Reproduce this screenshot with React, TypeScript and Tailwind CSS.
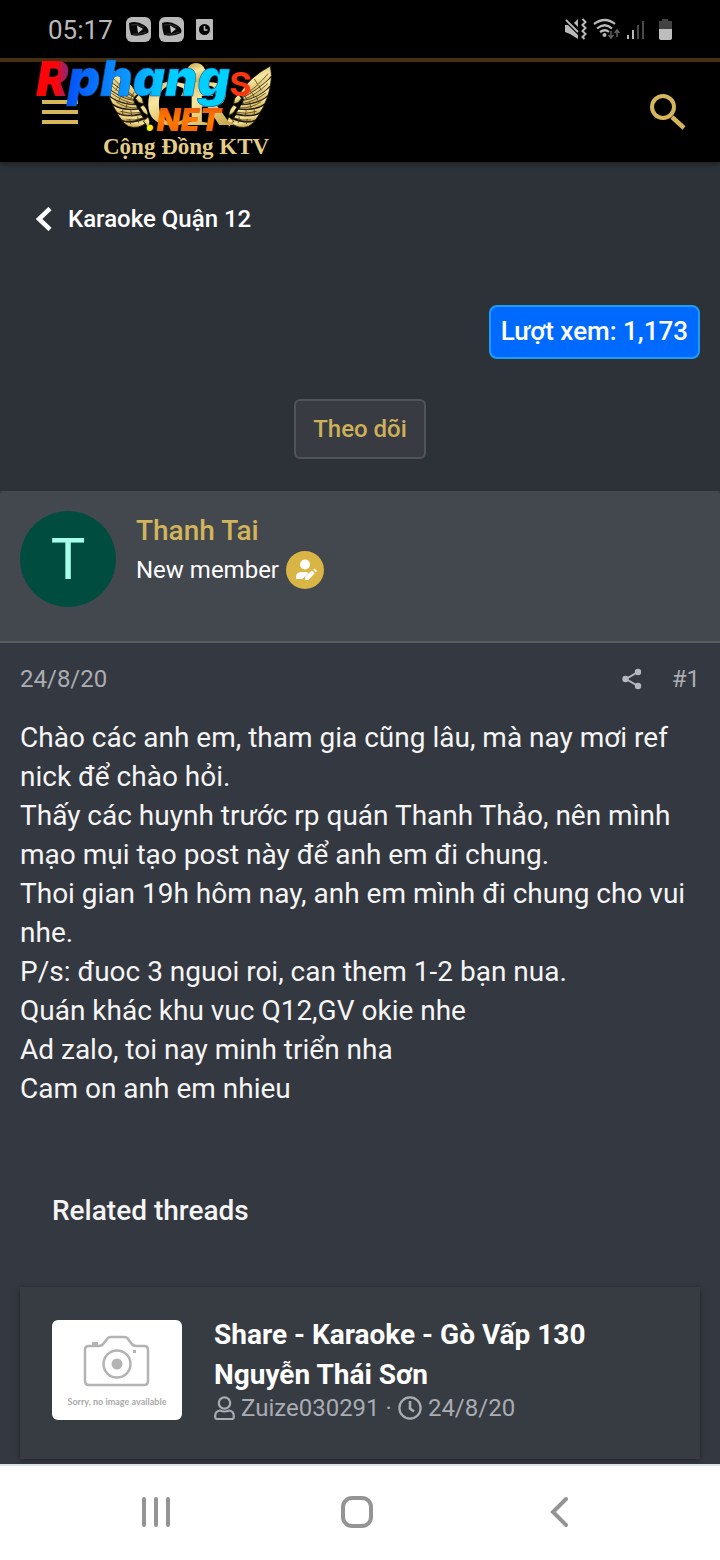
import React from "react";

const feathers = [
  "M36 0 Q18 10 9 26 L13 30 Q30 20 37 9 Z",
  "M37 10 Q24 23 12 29 L13 33 Q29 28 36 18 Z",
  "M36 19 Q25 30 12 32 L12 36 Q28 34 34 27 Z",
  "M34 28 Q24 36 10 36 L9 40 Q24 41 31 35 Z",
  "M31 36 Q22 42 8 40 L6 44 Q20 48 27 43 Z",
  "M27 44 Q19 48 6 45 L4 48 Q16 54 23 50 Z",
  "M23 51 Q14 54 3 49 L1 52 Q8 59 17 56 Z",
  "M8 26 Q4 30 4 35 L8 34 L11 30 Z",
  "M4 36 Q0 40 0 46 L4 43 L7 38 Z",
  "M0 47 Q-3 51 0 57 L4 51 Z",
];

function Wing({ transform }: { transform: string }) {
  return (
    <g transform={transform} fill="url(#gold)">
      {feathers.map((d) => (
        <path key={d} d={d} stroke="#15110a" strokeWidth="0.7" />
      ))}
      <g stroke="#4b3a18" strokeWidth="0.7" fill="none">
        <path d="M34 7 Q24 20 12 28M34 16 Q23 27 13 31M32 25 Q22 33 11 35M28 33 Q20 39 9 39M24 42 Q15 45 7 43M19 50 Q12 51 4 48" />
        <path d="M22 12 L25 17M16 18 L19 24M12 24 L15 30M26 18 L28 23M20 25 L22 29M24 29 L26 34M18 33 L19 39M22 40 L22 45M15 41 L14 47M16 49 L15 54M9 47 L8 53" />
      </g>
    </g>
  );
}

function Logo() {
  return (
    <svg viewBox="0 0 240 104" className="h-[104px] w-[240px] overflow-visible" aria-label="Rphangs.NET">
      <defs>
        <linearGradient id="gold" x1="0" y1="0" x2="0.4" y2="1">
          <stop offset="0" stopColor="#c49a35" />
          <stop offset="0.5" stopColor="#f6e7a0" />
          <stop offset="1" stopColor="#c9a548" />
        </linearGradient>
        <linearGradient id="red" x1="0" y1="0" x2="1" y2="0">
          <stop offset="0.6" stopColor="#fb0509" />
          <stop offset="1" stopColor="#6a2f9c" />
        </linearGradient>
        <linearGradient id="blue" gradientUnits="userSpaceOnUse" x1="34" y1="0" x2="196" y2="0">
          <stop offset="0" stopColor="#0653fa" />
          <stop offset="0.35" stopColor="#0b96ff" />
          <stop offset="0.6" stopColor="#04ccff" />
          <stop offset="1" stopColor="#00d2ff" />
        </linearGradient>
        <linearGradient id="orange" x1="0" y1="0" x2="0" y2="1">
          <stop offset="0" stopColor="#e64b10" />
          <stop offset="0.5" stopColor="#ff7b00" />
          <stop offset="1" stopColor="#ef5c0b" />
        </linearGradient>
      </defs>
      <Wing transform="translate(194 8) scale(1.15 1.08)" />
      <Wing transform="translate(113 8) scale(-1.15 1.08)" />
      <ellipse cx="161" cy="16" rx="10" ry="11" fill="url(#gold)" />
      <path d="M152 25 H172 L178 38 H146 Z" fill="#d5b65c" />
      <text x="110" y="67" fontSize="66" fontWeight="700" className="font-['Liberation_Serif',serif]" fill="url(#gold)">C</text>
      <text x="150" y="67" fontSize="66" fontWeight="700" className="font-['Liberation_Serif',serif]" fill="url(#gold)">R</text>
      <g className="font-[Inter,sans-serif]" fontWeight="900" fontStyle="italic">
        <text x="1" y="38" fontSize="48" fill="url(#red)">R</text>
        <text x="33" y="38" fontSize="50" fill="url(#blue)" stroke="#075aa8" strokeWidth="0.6">phang</text>
        <text x="110" y="73" fontSize="31" fill="url(#orange)">
          <tspan fill="#fff000">.</tspan>NET
        </text>
      </g>
      <text x="194" y="38" fontSize="45" fontWeight="500" className="font-[Roboto,sans-serif]" fill="#fa3510">s</text>
      <text x="68" y="96" fontSize="23" fontWeight="700" className="font-['Liberation_Serif',serif]" fill="#e3cc88">Cộng Đồng KTV</text>
    </svg>
  );
}

function AppBadge() {
  return (
    <svg viewBox="0 0 25 25" className="size-[25px]">
      <rect width="25" height="25" rx="6" fill="#b9b9b9" />
      <path d="M3 6 Q10 3 18 8 Q24 12 22 16 Q14 20 5 18 Q3 12 3 6 Z" fill="#080808" />
      <path d="M5 8 Q11 6 18 10M7 17 Q14 18 20 15" stroke="#333" fill="none" />
      <path d="M11 8.500 L17 12 L12 16 Z" fill="#c8c8c8" />
    </svg>
  );
}

function StatusBar() {
  return (
    <div className="flex h-[58px] items-center justify-between bg-black pr-[46px] pl-12 text-[#b9b9b9]">
      <div className="flex items-center">
        <time className="w-[78px] pt-0.5 text-[26px] leading-8">05:17</time>
        <div className="flex items-center gap-2">
          <AppBadge />
          <AppBadge />
          <svg viewBox="0 0 17 21" className="ml-1 h-[21px] w-[17px]">
            <rect width="17" height="21" rx="1" fill="#b9b9b9" />
            <circle cx="8.500" cy="10.500" r="5.500" fill="#000" />
            <path d="M8.500 7 V11 H11.500" stroke="#b9b9b9" strokeWidth="1.600" fill="none" />
          </svg>
        </div>
      </div>
      <svg viewBox="0 0 110 24" className="h-6 w-[110px]" fill="none">
        <path d="M1 8 H4 L14 18 V22 L6 17 L1 15 Z M10 6 L14 2 V10 Z" fill="#b9b9b9" />
        <path d="M2 3 L14 15" stroke="#b9b9b9" strokeWidth="1.800" />
        <path d="M18.500 2 l3 3 -3 3 3 3 -3 3 3 3 -3 3 2 2" stroke="#b9b9b9" strokeWidth="2" />
        <path d="M30 7 Q41 -1 51 7M33 11.500 Q41 5 48 11.500M36 15 Q41 11.500 45 15" stroke="#b9b9b9" strokeWidth="2.200" />
        <circle cx="40.500" cy="18" r="2" fill="#b9b9b9" />
        <path d="M47 14 V21M44.500 18 L47 21 L49.500 18M53 20 V13M50.500 16 L53 13 L55.500 16" stroke="#606060" strokeWidth="1.500" />
        <path d="M64 18 V22M69 13 V22" stroke="#b9b9b9" strokeWidth="2" />
        <path d="M74 8 V22M79 4 V22" stroke="#4a4a4a" strokeWidth="2" />
        <path d="M98 2 H104 V4 H108 V12 H95 V4 H98 Z" fill="#424242" />
        <path d="M95 12 H108 V21 Q108 23 106 23 H97 Q95 23 95 21 Z" fill="#bdbdbd" />
      </svg>
    </div>
  );
}

function Header() {
  return (
    <header className="relative flex h-[104px] items-center justify-between border-t-4 border-[#46300f] bg-black pr-[34px] pl-[42px] shadow-[0_2px_5px_rgba(0,0,0,0.4)]">
      <button aria-label="Menu" className="flex w-9 flex-col gap-[6px]">
        <span className="h-1 bg-[#d5b65c]" />
        <span className="h-1 bg-[#d5b65c]" />
        <span className="h-1 bg-[#d5b65c]" />
      </button>
      <a href="#home" className="absolute -top-1 left-[35px]">
        <Logo />
      </a>
      <button aria-label="Search">
        <svg viewBox="0 0 36 36" className="size-9" fill="none" stroke="#d5b65c" strokeWidth="4">
          <circle cx="13" cy="13" r="11" />
          <path d="M22 23 L34 34" strokeWidth="4.500" />
        </svg>
      </button>
    </header>
  );
}

const body = [
  "Chào các anh em, tham gia cũng lâu, mà nay mơi ref nick để chào hỏi.",
  "Thấy các huynh trước rp quán Thanh Thảo, nên mình mạo mụi tạo post này để anh em đi chung.",
  "Thoi gian 19h hôm nay, anh em mình đi chung cho vui nhe.",
  "P/s: đuoc 3 nguoi roi, can them 1-2 bạn nua.",
  "Quán khác khu vuc Q12,GV okie nhe",
  "Ad zalo, toi nay minh triển nha",
  "Cam on anh em nhieu",
];

function Post() {
  return (
    <article className="bg-[#343840]">
      <div className="flex h-[152px] gap-5 rounded-t border-b-2 border-[#585c63] bg-[#43474e] px-5 pt-5">
        <div className="flex size-24 items-center justify-center rounded-full bg-[#004d40] text-[58px] leading-none text-[#a7ffeb]">
          T
        </div>
        <div>
          <a href="#member" className="block text-[28px] leading-[39px] font-medium text-[#d2b45a]">
            Thanh Tai
          </a>
          <div className="flex items-center gap-[7px]">
            <span className="text-[24px] leading-10 text-white">New member</span>
            <svg viewBox="0 0 38 38" className="size-[38px]">
              <circle cx="19" cy="19" r="19" fill="#d8b545" />
              <circle cx="19" cy="13.500" r="5" fill="#fff" />
              <path d="M10 28 V26 Q10 21 16 21 H20 L22.500 21.700 L16.500 28 Z" fill="#fff" />
              <path d="M19 29 V25.500 L26 19.500 L28.800 22.300 L22.500 29 Z M27.300 18.500 L28.500 17.500 L31 20 L30 21.200 Z" fill="#fff" />
            </svg>
          </div>
        </div>
      </div>
      <div className="flex items-center justify-between px-5 pt-4 text-[24px] leading-10 text-[#a9acb3]">
        <time>24/8/20</time>
        <div className="flex items-center gap-[30px]">
          <button aria-label="Share">
            <svg viewBox="0 0 20 22" className="h-[22px] w-5" fill="#b5b8bf">
              <path d="M16 4 L4 11 L16 18" fill="none" stroke="#b5b8bf" strokeWidth="2" />
              <circle cx="16" cy="4" r="3.200" />
              <circle cx="3.500" cy="11" r="3.200" />
              <circle cx="16" cy="18" r="3.200" />
            </svg>
          </button>
          <a href="#post-1">#1</a>
        </div>
      </div>
      <div className="px-5 pt-[19px] text-[28px] leading-[39px] text-[#f5f5f5]">
        {body.map((line) => (
          <p key={line}>{line}</p>
        ))}
      </div>
      <Related />
    </article>
  );
}

function Related() {
  return (
    <section className="px-5 pt-[83px] pb-[5px]">
      <h2 className="px-8 text-[28px] leading-10 font-medium text-[#f5f5f5]">Related threads</h2>
      <div className="mt-14 flex gap-8 bg-[#373b42] px-8 pt-7 pb-[38px] shadow-[0_1px_5px_rgba(0,0,0,0.4)]">
        <svg viewBox="0 0 130 100" className="mt-[5px] h-[100px] w-[130px] shrink-0 rounded-md bg-white" fill="none" stroke="#b3b3b3" strokeWidth="2.500">
          <path d="M37 26 H47 Q50 26 52 23 L55 19 Q56 17 59 17 H72 Q75 17 76 19 L79 23 Q81 26 84 26 H92 Q96 26 96 30 V61 Q96 65 92 65 H37 Q33 65 33 61 V30 Q33 26 37 26 Z" />
          <circle cx="65" cy="44" r="13.500" />
          <circle cx="65" cy="44" r="5.500" fill="#b3b3b3" stroke="none" />
          <path d="M40 22 h6 v3 h-6 z M81 30 h3 v3 h-3 z" fill="#b3b3b3" stroke="none" />
          <text x="65" y="85" textAnchor="middle" fontSize="9" fontWeight="700" fill="#aaaaaa" stroke="none" className="font-[Lato,sans-serif]">
            Sorry, no image available
          </text>
        </svg>
        <div>
          <h3 className="text-[28px] leading-10 font-bold text-white">
            <a href="#thread">Share - Karaoke - Gò Vấp 130 Nguyễn Thái Sơn</a>
          </h3>
          <div className="flex items-center text-[24px] leading-[26px] text-[#a9acb3]">
            <svg viewBox="0 0 21 24" className="mr-[6px] h-6 w-[21px]" fill="none" stroke="#a9acb3" strokeWidth="2.200">
              <circle cx="10.500" cy="7" r="5.700" />
              <path d="M6 14.500 Q10.500 16.500 15 14.500 Q19.800 15 19.800 20 V21 Q19.800 23 18 23 H3 Q1.200 23 1.200 21 V20 Q1.200 15 6 14.500 Z" />
            </svg>
            <a href="#author">Zuize030291</a>
            <span className="mx-[6px]">·</span>
            <svg viewBox="0 0 24 24" className="mr-[6px] size-6" fill="none" stroke="#a9acb3" strokeWidth="2.300">
              <circle cx="12" cy="12" r="10.600" />
              <path d="M12 5 V12.500 L16 15.500" strokeWidth="2.600" />
            </svg>
            <time>24/8/20</time>
          </div>
        </div>
      </div>
    </section>
  );
}

function NavBar() {
  return (
    <nav className="grid h-24 grid-cols-3 border-t-2 border-[#dfe2e4] bg-white pr-[62px] pb-0.5 pl-14 text-[#949494]">
      <button aria-label="Recents" className="flex items-center justify-center">
        <svg viewBox="0 0 32 32" className="size-8" stroke="currentColor" strokeWidth="4" strokeLinecap="round">
          <path d="M4 3 V29M16 3 V29M28 3 V29" />
        </svg>
      </button>
      <button aria-label="Home" className="flex items-center justify-center">
        <svg viewBox="0 0 32 32" className="size-8" fill="none" stroke="currentColor" strokeWidth="4">
          <rect x="2" y="2" width="28" height="28" rx="9" />
        </svg>
      </button>
      <button aria-label="Back" className="flex items-center justify-center">
        <svg viewBox="0 0 32 32" className="size-8" fill="none" stroke="currentColor" strokeWidth="4" strokeLinecap="round">
          <path d="M24 3 L11 16 L24 29" />
        </svg>
      </button>
    </nav>
  );
}

export default function App() {
  return (
    <div className="bg-[#2d3138] font-[Roboto,sans-serif]">
      <StatusBar />
      <Header />
      <main>
        <a href="#forum" className="mt-[37px] flex items-center gap-4 px-9 text-[24px] leading-10 font-medium text-white">
          <svg viewBox="0 0 16 24" className="h-6 w-4" fill="none" stroke="currentColor" strokeWidth="4.500">
            <path d="M14 1.500 L3 12 L14 22.500" />
          </svg>
          Karaoke Quận 12
        </a>
        <div className="mt-[66px] flex justify-end px-5">
          <div className="rounded-lg border-2 border-[#1e9df5] bg-[#006aff] px-[10px] pt-[5px] pb-[7px] text-[26px] leading-[38px] font-medium text-white">
            Lượt xem: 1,173
          </div>
        </div>
        <div className="mt-10 mb-8 flex justify-center">
          <button className="rounded-md border-2 border-[#505358] bg-[#383b41] px-[17px] py-2 text-[24px] leading-10 font-medium text-[#cdb05a]">
            Theo dõi
          </button>
        </div>
        <Post />
      </main>
      <NavBar />
    </div>
  );
}
